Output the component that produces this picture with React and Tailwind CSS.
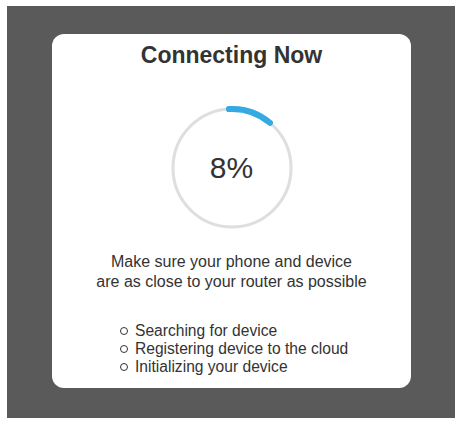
export default function App() {
  const r = 59;
  const cx = 62;
  const cy = 62;
  const toXY = (deg) => {
    const a = ((deg - 90) * Math.PI) / 180;
    return [cx + r * Math.cos(a), cy + r * Math.sin(a)];
  };
  const [sx, sy] = toXY(-3);
  const [ex, ey] = toXY(40);
  const arc = `M ${sx} ${sy} A ${r} ${r} 0 0 1 ${ex} ${ey}`;
  const items = [
    "Searching for device",
    "Registering device to the cloud",
    "Initializing your device",
  ];
  return (
    <div
      className="w-[463px] h-[425px] bg-white pt-[6px] pl-[7px] pr-[8px] pb-[7px]"
      style={{ fontFamily: '"Liberation Sans", Arial, sans-serif' }}
    >
      <div className="w-full h-full bg-[#5a5a5a] pt-[28px] pl-[45px] pr-[44px] pb-[30px]">
        <div className="w-full h-full bg-white rounded-[12px] flex flex-col items-center text-[#333333]">
          <div className="pt-[8px] text-[23px] leading-[27px] font-bold">Connecting Now</div>
          <div className="relative mt-[37px] w-[124px] h-[124px]">
            <svg width="124" height="124" viewBox="0 0 124 124" className="absolute inset-0">
              <circle cx={cx} cy={cy} r={r} fill="none" stroke="#dedede" strokeWidth="3" />
              <path d={arc} fill="none" stroke="#35a9e1" strokeWidth="6" strokeLinecap="round" />
            </svg>
            <div className="absolute inset-0 flex items-center justify-center text-[30px] leading-none pb-[1px]">
              8%
            </div>
          </div>
          <div className="mt-[22px] text-center text-[16px] leading-[20px]">
            <div>Make sure your phone and device</div>
            <div>are as close to your router as possible</div>
          </div>
          <div className="self-stretch mt-[30px] pl-[68px] text-[15.6px] leading-[18px]">
            {items.map((t) => (
              <div key={t} className="flex items-center">
                <span className="w-[8px] h-[8px] rounded-full border border-[#333333] mr-[7px]" />
                <span>{t}</span>
              </div>
            ))}
          </div>
        </div>
      </div>
    </div>
  );
}
